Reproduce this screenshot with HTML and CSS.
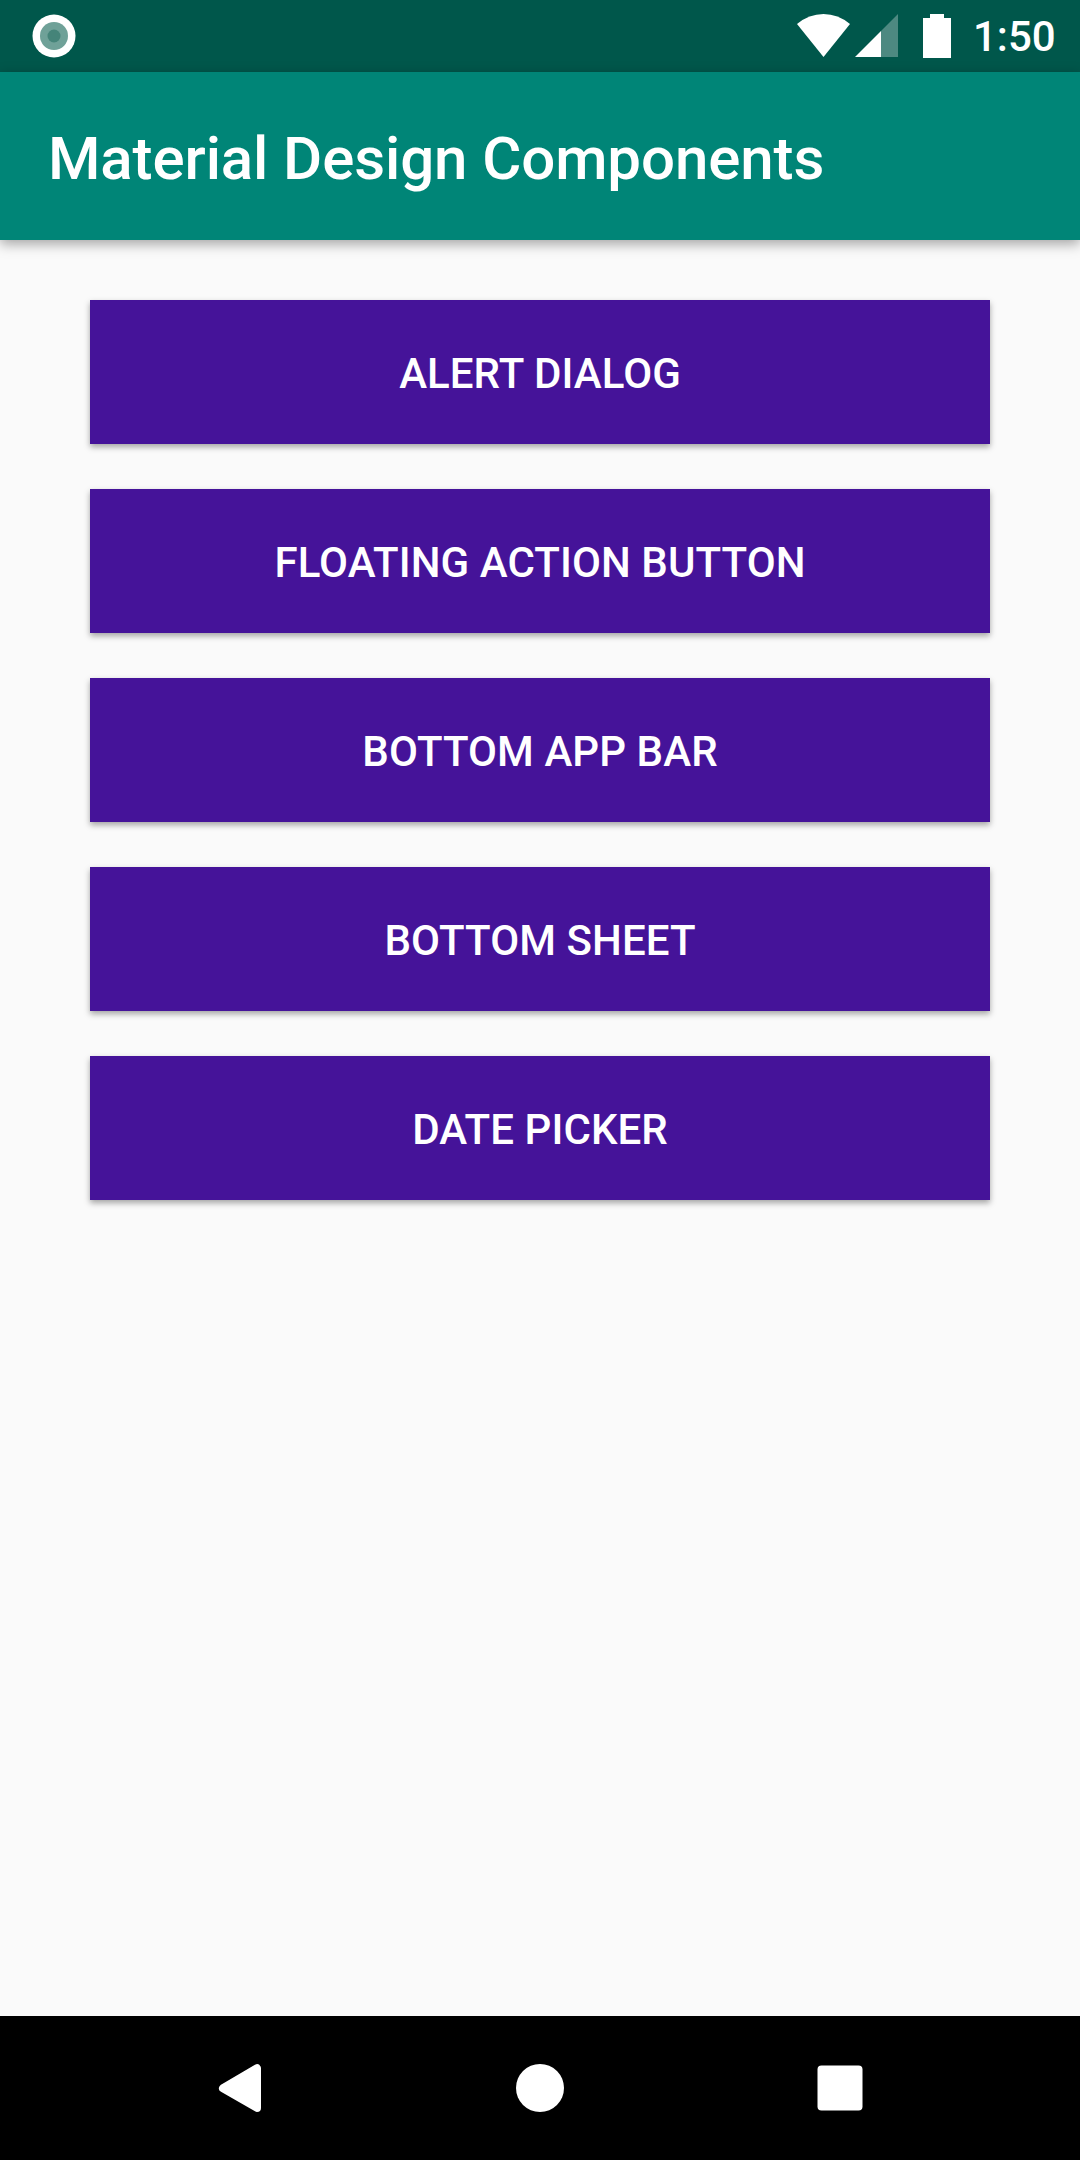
FILE: index.html
```html
<!DOCTYPE html>
<html lang="en">
<head>
<meta charset="utf-8">
<title>Material Design Components</title>
<link rel="stylesheet" href="styles.css">
</head>
<body>
<div class="status">
  <svg class="notify" width="44" height="44" viewBox="0 0 44 44"><circle cx="22" cy="22" r="21.500" fill="#fff"/><circle cx="22" cy="22" r="14" fill="#6fa198"/><circle cx="22" cy="22" r="6.500" fill="#458479"/></svg>
  <svg class="signals" width="160" height="72" viewBox="796 0 160 72"><path fill="#fff" d="M823.500 57L797 24Q809 14 823.500 14T850 24Z"/><path fill="#fff" fill-opacity=".3" d="M881 31L898 14V57H881Z"/><path fill="#fff" d="M855 57L881 31V57Z"/><path fill="#fff" d="M923 18H930V14H944V18H951V58H923Z"/></svg>
  <span class="clock">1:50</span>
</div>
<header class="appbar"><h1>Material Design Components</h1></header>
<main class="content">
  <button class="btn">ALERT DIALOG</button>
  <button class="btn">FLOATING ACTION BUTTON</button>
  <button class="btn">BOTTOM APP BAR</button>
  <button class="btn">BOTTOM SHEET</button>
  <button class="btn">DATE PICKER</button>
</main>
<nav class="navbar">
  <svg width="60" height="60" viewBox="0 0 60 60"><path d="M13 30.300L47 10.200V49.900Z" fill="#fff" stroke="#fff" stroke-width="8" stroke-linejoin="round"/></svg>
  <svg width="60" height="60" viewBox="0 0 60 60"><circle cx="30" cy="30" r="24" fill="#fff"/></svg>
  <svg width="60" height="60" viewBox="0 0 60 60"><rect x="7.500" y="7.500" width="45" height="45" rx="4" fill="#fff"/></svg>
</nav>
</body>
</html>
```
FILE: styles.css
```css
body {
  margin: 0;
  height: 2160px;
  display: flex;
  flex-direction: column;
  background: #fafafa;
  font-family: Roboto, sans-serif;
  font-weight: 500;
  color: #fff;
}
.status { height: 72px; display: flex; align-items: center; background: #00574b; }
.notify { margin-left: 32px; }
.signals { margin-left: 720px; }
.clock { margin-left: 17px; padding-top: 2px; font-size: 42px; line-height: 70px; }
.appbar {
  box-sizing: border-box;
  height: 168px;
  display: flex;
  align-items: center;
  padding: 5px 0 0 48px;
  background: #008577;
  box-shadow: 0 4px 12px rgba(0, 0, 0, .35);
}
h1 { margin: 0; font-size: 60px; line-height: 70px; font-weight: 500; letter-spacing: -.1px; }
.content { flex: 1; display: flex; flex-direction: column; gap: 45px; padding: 60px 90px; }
.btn {
  height: 144px;
  padding: 2px 0 0;
  border: 0;
  background: #451399;
  color: #fff;
  font: 500 42px Roboto, sans-serif;
  letter-spacing: .08px;
  box-shadow: 0 3px 6px rgba(0, 0, 0, .35);
}
.navbar { height: 144px; display: flex; justify-content: center; align-items: center; gap: 240px; background: #000; }
```
